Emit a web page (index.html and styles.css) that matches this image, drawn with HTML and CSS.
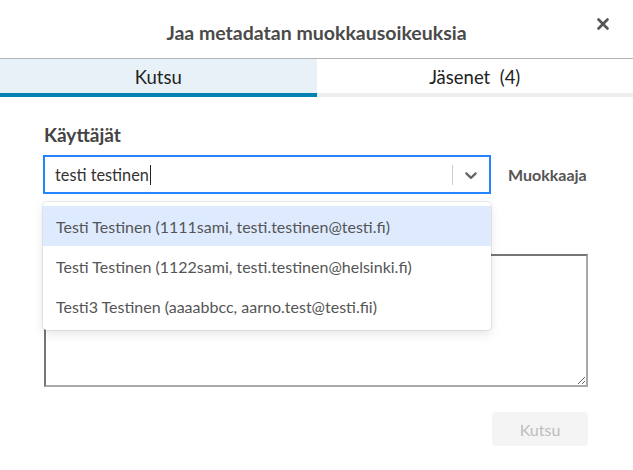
FILE: index.html
```html
<!DOCTYPE html>
<html lang="fi">
<head>
<meta charset="utf-8">
<title>Jaa metadatan muokkausoikeuksia</title>
<link rel="stylesheet" href="styles.css">
</head>
<body>
<div class="dialog">
  <header class="head">
    <h1 class="title">Jaa metadatan muokkausoikeuksia</h1>
    <button class="close" aria-label="Sulje">
      <svg width="12" height="12" viewBox="0 0 12 12"><path d="M1.5 1.5 L10.5 10.5 M10.5 1.5 L1.5 10.5" stroke="#555" stroke-width="2.6" stroke-linecap="round"/></svg>
    </button>
  </header>
  <nav class="tabs">
    <div class="tab active">Kutsu</div>
    <div class="tab">Jäsenet&nbsp; (4)</div>
  </nav>
  <main class="content">
    <div class="label">Käyttäjät</div>
    <div class="row">
      <div class="select-wrap">
        <div class="select">
          <div class="value">testi testinen<span class="caret"></span></div>
          <span class="sep"></span>
          <span class="chev">
            <svg width="20" height="20" viewBox="0 0 20 20"><path fill="#666" d="M4.516 7.548c0.436-0.446 1.043-0.481 1.576 0l3.908 3.747 3.908-3.747c0.533-0.481 1.141-0.446 1.574 0 0.436 0.445 0.408 1.197 0 1.615-0.406 0.418-4.695 4.502-4.695 4.502-0.217 0.223-0.502 0.335-0.787 0.335s-0.57-0.112-0.789-0.335c0 0-4.287-4.084-4.695-4.502s-0.436-1.170 0-1.615z"/></svg>
          </span>
        </div>
        <ul class="menu">
          <li class="opt focused">Testi Testinen (1111sami, testi.testinen@testi.fi)</li>
          <li class="opt">Testi Testinen (1122sami, testi.testinen@helsinki.fi)</li>
          <li class="opt">Testi3 Testinen (aaaabbcc, aarno.test@testi.fii)</li>
        </ul>
      </div>
      <span class="role">Muokkaaja</span>
    </div>
    <textarea class="msg"></textarea>
    <div class="actions">
      <button class="invite" disabled>Kutsu</button>
    </div>
  </main>
</div>
</body>
</html>
```
FILE: styles.css
```css
* { box-sizing: border-box; }
html, body { margin: 0; padding: 0; background: #fff; }
body {
  width: 633px;
  height: 470px;
  font-family: Lato, "Open Sans", sans-serif;
  color: #333;
  overflow: hidden;
}
.dialog { width: 633px; }
.head {
  height: 59px;
  border-bottom: 1px solid #b3b3b3;
  display: flex;
  align-items: center;
  justify-content: center;
  position: relative;
}
.title {
  margin: 8px 0 0;
  font-size: 19.5px;
  font-weight: 700;
  color: #4a4a4a;
  line-height: 22px;
}
.close {
  position: absolute;
  right: 24px;
  top: 18px;
  width: 12px;
  height: 12px;
  padding: 0;
  border: 0;
  background: none;
  display: flex;
}
.tabs {
  display: flex;
  height: 38px;
}
.tab {
  flex: 1;
  display: flex;
  align-items: center;
  justify-content: center;
  font-size: 18.5px;
  color: #222;
  border-bottom: 4px solid #eee;
  padding-top: 1px;
}
.tab.active {
  background: #e8f1f8;
  border-bottom-color: #0082b3;
}
.content {
  padding: 26px 45px 0 43px;
}
.label {
  margin-left: 1px;
  font-size: 19px;
  font-weight: 700;
  color: #444;
  line-height: 24px;
}
.row {
  margin-top: 8px;
  display: flex;
  align-items: center;
  gap: 17px;
}
.select-wrap {
  position: relative;
  width: 448px;
}
.select {
  height: 39px;
  border: 2px solid #2684ff;
  display: flex;
  align-items: center;
}
.value {
  flex: 1;
  padding-left: 10px;
  font-size: 16.3px;
  color: #333;
  display: flex;
  align-items: center;
}
.caret {
  display: inline-block;
  width: 1px;
  height: 20px;
  background: #222;
  margin-left: 1px;
}
.sep {
  width: 1px;
  height: 20px;
  background: #ccc;
}
.chev {
  width: 36px;
  display: flex;
  justify-content: center;
  align-items: center;
}
.menu {
  position: absolute;
  left: 0;
  top: 47px;
  width: 448px;
  margin: 0;
  padding: 4px 0;
  list-style: none;
  background: #fff;
  border-radius: 4px;
  box-shadow: 0 0 0 1px rgba(0,0,0,0.08), 0 4px 11px rgba(0,0,0,0.1);
  z-index: 2;
}
.opt {
  height: 40px;
  display: flex;
  align-items: center;
  padding-left: 13px;
  font-size: 16px;
  color: #555;
}
.opt.focused { background: #deebff; }
.role {
  font-size: 16px;
  font-weight: 700;
  color: #555;
}
.msg {
  display: block;
  margin: 60px 0 0 1px;
  width: 544px;
  height: 133px;
  border-style: solid;
  border-width: 2px;
  border-color: #767676 #a9a9a9 #a9a9a9 #767676;
  resize: both;
  font-family: inherit;
}
.actions {
  display: flex;
  justify-content: flex-end;
  margin-top: 25px;
}
.invite {
  width: 96px;
  height: 34px;
  border: 0;
  border-radius: 4px;
  background: #f4f4f4;
  color: #bdbdbd;
  font-family: inherit;
  font-size: 16px;
}
```
